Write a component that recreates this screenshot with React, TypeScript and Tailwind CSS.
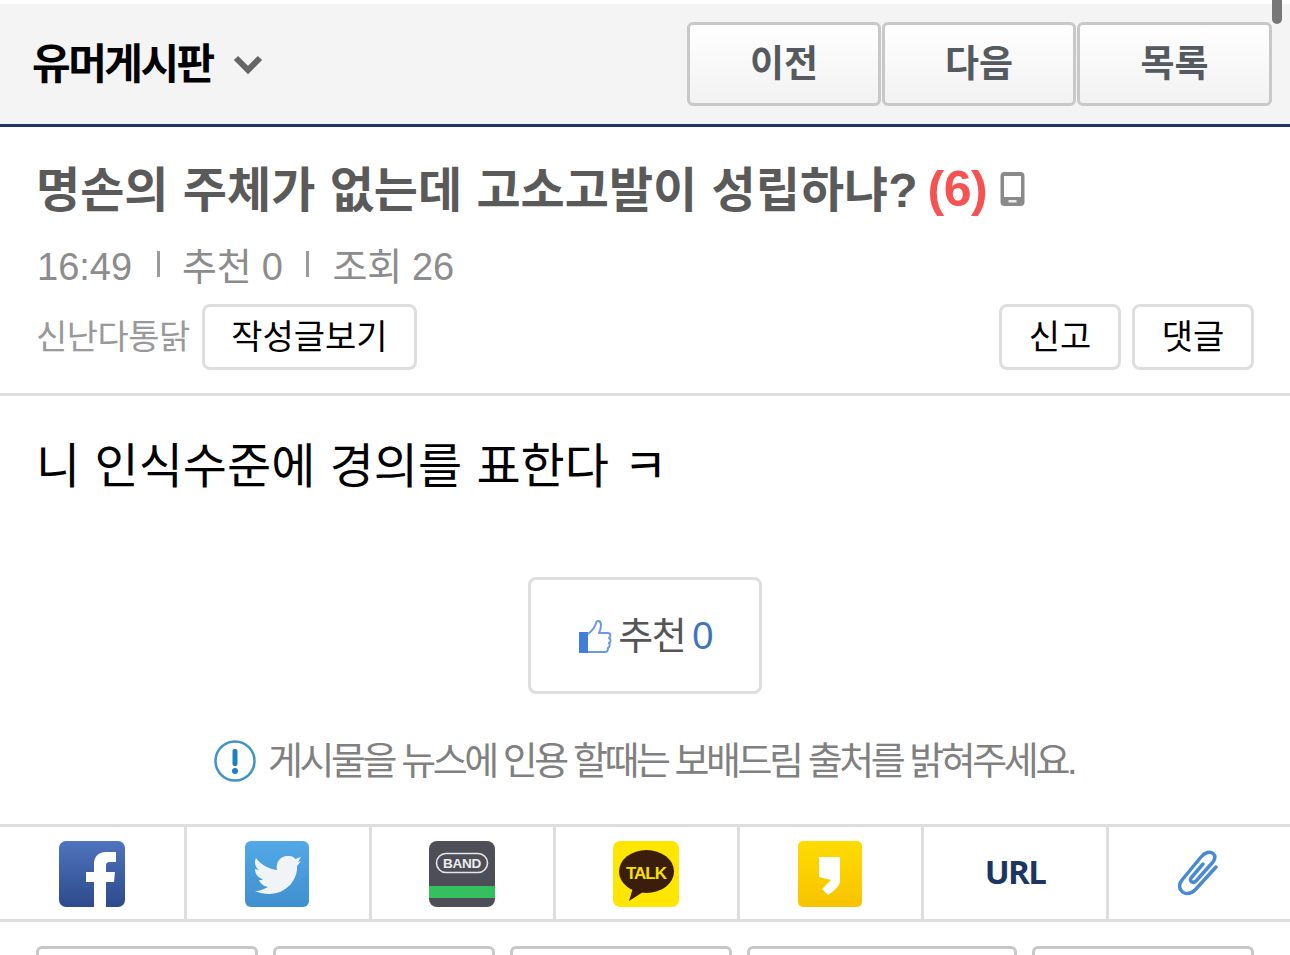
import React from "react";

const font = { fontFamily: '"Liberation Sans", "Noto Sans CJK KR", sans-serif' };

function NavButton({ label, w }: { label: string; w: string }) {
  return (
    <button className={`${w} h-full rounded-[6px] border-[3px] border-[#c8c8c8] bg-gradient-to-b from-white to-[#f2f2f2] pt-[2px] text-[37px] font-bold text-[#555a60] flex items-center justify-center`}>
      {label}
    </button>
  );
}

function OutlineButton({ label, w }: { label: string; w: string }) {
  return (
    <button className={`${w} h-[66px] rounded-[8px] border-[3px] border-[#dedede] bg-white text-[34px] text-black flex items-center justify-center`}>
      {label}
    </button>
  );
}

function ShareCell({ children, last, w }: { children: React.ReactNode; last?: boolean; w: string }) {
  return (
    <div className={`${w} h-full flex items-center justify-center pt-[2px] ${last ? "" : "border-r-[3px] border-[#dedede]"}`}>
      {children}
    </div>
  );
}

function Facebook() {
  return (
    <svg width="66" height="66" viewBox="0 0 66 66">
      <defs>
        <linearGradient id="fb" x1="0" y1="0" x2="0" y2="1">
          <stop offset="0" stopColor="#4f74bd" />
          <stop offset="1" stopColor="#2d4a8c" />
        </linearGradient>
      </defs>
      <rect width="66" height="66" rx="7" fill="url(#fb)" />
      <path d="M35 66V41h-8V31h8v-8c0-8 5-12 12-12h10v10h-6c-3 0-4 1-4 4v6h9l-1 10h-8v25z" fill="#fff" />
    </svg>
  );
}

function Twitter() {
  return (
    <svg width="64" height="66" viewBox="0 0 64 66">
      <defs>
        <linearGradient id="tw" x1="0" y1="0" x2="0" y2="1">
          <stop offset="0" stopColor="#52a9e6" />
          <stop offset="1" stopColor="#3f8fcf" />
        </linearGradient>
      </defs>
      <rect width="64" height="66" rx="6" fill="url(#tw)" />
      <path d="M11 17C16 24 24 28 32 29C30 20 37 14 44 15C47 15 49 16 50 18L56 16L53 21L56 20L52 25C53 38 42 53 24 53C19 53 14 52 10 50C15 50 19 48 23 46C18 45 15 42 14 39C16 39 17 39 18 38C13 37 10 33 10 28C11 28 13 29 14 29C10 26 9 21 11 17Z" fill="#f1f4f7" />
    </svg>
  );
}

function Band() {
  return (
    <svg width="66" height="66" viewBox="0 0 66 66">
      <rect width="66" height="66" rx="8" fill="#4e4e58" />
      <rect x="7.500" y="12.500" width="51" height="19" rx="9.500" fill="none" stroke="#e8e8e8" strokeWidth="1.600" />
      <text x="33" y="27" textAnchor="middle" fontSize="13.500" fontWeight="700" fill="#eee" letterSpacing="-0.300" fontFamily="Liberation Sans">BAND</text>
      <rect y="45" width="66" height="12" fill="#35c05f" />
    </svg>
  );
}

function Talk() {
  return (
    <svg width="66" height="66" viewBox="0 0 66 66">
      <rect width="66" height="66" rx="7" fill="#ffe600" />
      <ellipse cx="33.500" cy="30.500" rx="27.500" ry="21.500" fill="#3a1d0a" />
      <path d="M20 47l-4 13 14-9z" fill="#3a1d0a" />
      <text x="33" y="37.500" textAnchor="middle" fontSize="17" fontWeight="700" letterSpacing="-1" fill="#f5e000" fontFamily="Liberation Sans">TALK</text>
    </svg>
  );
}

function KakaoStory() {
  return (
    <svg width="64" height="66" viewBox="0 0 64 66">
      <defs>
        <linearGradient id="ks" x1="0" y1="0" x2="0" y2="1">
          <stop offset="0" stopColor="#ffdc00" />
          <stop offset="1" stopColor="#f6c300" />
        </linearGradient>
      </defs>
      <rect width="64" height="66" rx="5" fill="url(#ks)" />
      <path d="M21 16h21v24c0 5-7 11-12 14l-6-6 9-9-12-3z" fill="#fff" />
    </svg>
  );
}

function Clip() {
  return (
    <svg width="40" height="46" viewBox="0 0 40 46" fill="none" stroke="#4a8ad0" strokeWidth="3.500" strokeLinecap="round" strokeLinejoin="round">
      <path d="M38 17L17 40C12 45 6 44 3.500 41C1 38 1 34 4 30L23 7C27 2 32 1 35 3.500C38 6 37 9 35 12L18 31C15 34 11 31 13 28L25 14" />
    </svg>
  );
}

function Thumb() {
  return (
    <svg width="34" height="36" viewBox="0 0 34 36">
      <rect x="1" y="14" width="9" height="21" fill="#3f7fd6" />
      <path d="M10 16c4-3 7-7 8-11 .5-3 5-3 5 2 0 3-1 6-2 8h9c3 0 3 4 1 5 2 1 2 4 0 5 1 1 1 4-1 5 0 3-1 4-3 4H10" fill="none" stroke="#6a9bdf" strokeWidth="2" strokeLinejoin="round" />
    </svg>
  );
}

function Phone() {
  return (
    <svg width="25" height="34" viewBox="0 0 24 34">
      <rect x="0" y="0" width="24" height="34" rx="4" fill="#8a8a8a" />
      <rect x="3.500" y="4" width="17" height="21" fill="#fff" />
      <rect x="8" y="28" width="8" height="2.500" fill="#eee" />
    </svg>
  );
}

export default function App() {
  return (
    <div style={font} className="relative h-[955px] w-full overflow-hidden bg-white pt-[4px]">
      <div className="absolute right-[8px] top-0 h-[24px] w-[10px] rounded-b-[5px] bg-[#777]" />

      <header className="flex h-[123px] items-center justify-between border-b-[3px] border-[#1c3561] bg-[#f4f4f4] pl-[32px] pr-[18px]">
        <div className="flex items-center">
          <span className="text-[42px] font-bold tracking-[-2.500px] text-black">유머게시판</span>
          <svg width="32" height="22" viewBox="0 0 32 22" className="ml-[19px] mt-[2px]">
            <path d="M4 4l12 12L28 4" fill="none" stroke="#666" strokeWidth="6" />
          </svg>
        </div>
        <div className="flex h-[84px] gap-[1px]">
          <NavButton label="이전" w="w-[194px]" />
          <NavButton label="다음" w="w-[194px]" />
          <NavButton label="목록" w="w-[195px]" />
        </div>
      </header>

      <section className="h-[269px] border-b-[3px] border-[#dedede] pl-[36px] pr-[36px] pt-[32px]">
        <h1 className="flex h-[60px] items-center text-[48px] font-bold text-[#5a5a5a]">
          <span className="pt-[3px] [word-spacing:1px]">명손의 주체가 없는데 고소고발이 성립하냐?</span>
          <span className="ml-[10px] text-[50px] tracking-[-0.500px] text-[#f65252]">(6)</span>
          <span className="ml-[13px]"><Phone /></span>
        </h1>
        <div className="mt-[26px] flex h-[44px] items-center pl-[1px] text-[38px] tracking-[-0.300px] text-[#8c8c8c]">
          <span className="tracking-normal">16:49</span>
          <span className="ml-[25px] mr-[22px] mb-[6px] h-[26px] w-[3px] bg-[#9a9a9a]" />
          <span>추천 0</span>
          <span className="ml-[23px] mr-[24px] mb-[6px] h-[26px] w-[3px] bg-[#9a9a9a]" />
          <span>조회 26</span>
        </div>
        <div className="mt-[15px] flex items-center justify-between">
          <div className="flex items-center">
            <span className="mr-[12px] text-[34px] tracking-[-0.500px] text-[#999]">신난다통닭</span>
            <OutlineButton label="작성글보기" w="w-[215px]" />
          </div>
          <div className="flex gap-[11px]">
            <OutlineButton label="신고" w="w-[122px]" />
            <OutlineButton label="댓글" w="w-[122px]" />
          </div>
        </div>
      </section>

      <p className="mt-[41px] pl-[36px] text-[48px] leading-[60px] text-black [word-spacing:1px]">니 인식수준에 경의를 표한다 ㅋ</p>

      <div className="mt-[80px] flex justify-center">
        <div className="flex h-[117px] w-[234px] items-center justify-center gap-[6px] rounded-[8px] border-[3px] border-[#dedede] text-[38px] tracking-[-1.500px] text-[#555]">
          <Thumb />
          <span className="pt-[2px] [word-spacing:-2px]">추천 <span className="text-[#3f74bd]">0</span></span>
        </div>
      </div>

      <div className="mt-[43px] flex items-center justify-center pr-[2px]">
        <svg width="42" height="42" viewBox="0 0 42 42" className="mr-[12px]">
          <circle cx="21" cy="21" r="19.500" fill="#fff" stroke="#3f93c9" strokeWidth="2.500" />
          <rect x="18.500" y="9" width="5" height="17" rx="2" fill="#1f7fc4" />
          <circle cx="21" cy="31" r="3" fill="#1f7fc4" />
        </svg>
        <span className="text-[38px] leading-[48px] tracking-[-3.450px] text-[#808080]">게시물을 뉴스에 인용 할때는 보배드림 출처를 밝혀주세요.</span>
      </div>

      <div className="mt-[39px] flex h-[98px] border-y-[3px] border-[#dedede]">
        <ShareCell w="w-[187px]"><Facebook /></ShareCell>
        <ShareCell w="w-[185px]"><span className="mr-[2px] flex"><Twitter /></span></ShareCell>
        <ShareCell w="w-[184px]"><span className="mr-[2px] flex"><Band /></span></ShareCell>
        <ShareCell w="w-[184px]"><span className="mr-[2px] flex"><Talk /></span></ShareCell>
        <ShareCell w="w-[184px]"><span className="mr-[2px] flex"><KakaoStory /></span></ShareCell>
        <ShareCell w="w-[185px]"><span className="mb-[4px] text-[33px] font-bold tracking-[-1.600px] text-[#1c3561]" style={{ fontFamily: '"Open Sans", sans-serif' }}>URL</span></ShareCell>
        <ShareCell w="flex-1" last><span className="mr-[4px] mb-[2px] flex"><Clip /></span></ShareCell>
      </div>

      <div className="mt-[24px] flex gap-[15px] pl-[36px]">
        {["w-[222px]", "w-[222px]", "w-[222px]", "w-[270px]", "w-[222px]"].map((w, i) => (
          <div key={i} className={`${w} h-[60px] rounded-[6px] border-[3px] border-[#c8c8c8]`} />
        ))}
      </div>
    </div>
  );
}
